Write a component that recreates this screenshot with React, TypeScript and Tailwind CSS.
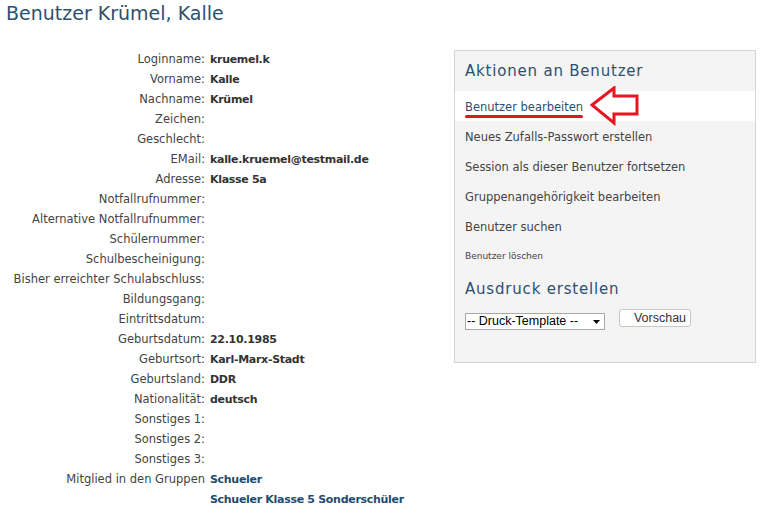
import React from 'react'

const rows: [string, string?][] = [
  ['Loginname:', 'kruemel.k'],
  ['Vorname:', 'Kalle'],
  ['Nachname:', 'Krümel'],
  ['Zeichen:'],
  ['Geschlecht:'],
  ['EMail:', 'kalle.kruemel@testmail.de'],
  ['Adresse:', 'Klasse 5a'],
  ['Notfallrufnummer:'],
  ['Alternative Notfallrufnummer:'],
  ['Schülernummer:'],
  ['Schulbescheinigung:'],
  ['Bisher erreichter Schulabschluss:'],
  ['Bildungsgang:'],
  ['Eintrittsdatum:'],
  ['Geburtsdatum:', '22.10.1985'],
  ['Geburtsort:', 'Karl-Marx-Stadt'],
  ['Geburtsland:', 'DDR'],
  ['Nationalität:', 'deutsch'],
  ['Sonstiges 1:'],
  ['Sonstiges 2:'],
  ['Sonstiges 3:'],
]

const actions = [
  'Neues Zufalls-Passwort erstellen',
  'Session als dieser Benutzer fortsetzen',
  'Gruppenangehörigkeit bearbeiten',
  'Benutzer suchen',
]

export default function App() {
  return (
    <div className="w-[760px] h-[516px] bg-white overflow-hidden text-[#444] font-['DejaVu_Sans',sans-serif]">
      <h1 className="px-[6px] pt-[1px] text-[19px] leading-[24px] text-[#2d5071]">Benutzer Krümel, Kalle</h1>

      <div className="flex mt-[25px]">
        {/* Benutzerdaten */}
        <div className="w-[454px] grid grid-cols-[210px_1fr] auto-rows-[20px] text-[11.5px] items-center">
          {rows.map(([label, value]) => (
            <React.Fragment key={label}>
              <div className="text-right pr-[5px] whitespace-nowrap">{label}</div>
              <div className="font-bold text-[11px] tracking-[-0.3px] text-[#333]">{value}</div>
            </React.Fragment>
          ))}
          <div className="text-right pr-[5px] whitespace-nowrap">Mitglied in den Gruppen</div>
          <div className="font-bold text-[11px] tracking-[-0.3px] text-[#1f4b6e]">Schueler</div>
          <div />
          <div className="font-bold text-[11px] tracking-[-0.3px] text-[#1f4b6e] whitespace-nowrap">Schueler Klasse 5 Sonderschüler</div>
        </div>

        {/* Aktionen */}
        <div className="w-[302px] h-[313px] bg-[#f4f4f4] border border-[#d4d4d4] self-start">
          <h2 className="px-[10px] pt-[10px] pb-[10px] text-[15px] leading-[20px] tracking-[0.8px] text-[#2d5071]">Aktionen an Benutzer</h2>
          <div className="relative h-[30px] bg-white flex items-center px-[10px] pt-[3px] text-[11.5px] text-[#2d5071]">
            <span>Benutzer bearbeiten</span>
            <span className="absolute left-[10px] top-[24px] w-[118px] h-[3px] bg-[#e8141f] rounded-full" />
            <svg className="absolute left-[135px] top-[-5px]" width="50" height="40" viewBox="0 0 50 40">
              <path d="M2 19 L24 2 L24 10 L47 10 L47 28 L24 28 L24 37 Z" fill="none" stroke="#e8141f" strokeWidth="3" strokeLinejoin="miter" />
            </svg>
          </div>
          {actions.map((a) => (
            <div key={a} className="h-[30px] flex items-center px-[10px] pt-[3px] text-[11.5px]">{a}</div>
          ))}
          <div className="h-[26px] flex items-center px-[10px] pt-[5px] text-[9px]">Benutzer löschen</div>
          <h2 className="px-[10px] pt-[12px] text-[15px] leading-[20px] tracking-[0.8px] text-[#2d5071]">Ausdruck erstellen</h2>
          <div className="flex items-start gap-[14px] px-[10px] pt-[10px]">
            <div className="mt-[4px] h-[17px] w-[140px] bg-white border border-[#a9a9a9] flex items-center justify-between pl-[1px] pr-[4px] text-[12.5px] text-black font-['Liberation_Sans',sans-serif]">
              <span>-- Druck-Template --</span>
              <svg width="7" height="4" viewBox="0 0 7 4"><path d="M0 0 L7 0 L3.5 4 Z" fill="#000" /></svg>
            </div>
            <button className="h-[18px] w-[72px] pl-[10px] bg-white border border-[#c8c8c8] rounded-[3px] text-[12.5px] leading-[14px] text-[#333] font-['Liberation_Sans',sans-serif]">Vorschau</button>
          </div>
        </div>
      </div>
    </div>
  )
}
